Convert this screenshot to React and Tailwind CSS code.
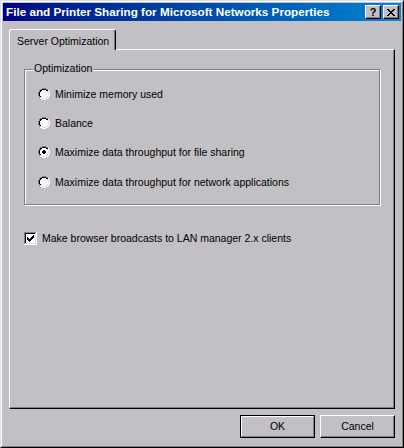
const PAL = { G: '#808080', K: '#000000', L: '#dfdfdf', W: '#ffffff' };

function Pixels({ map }) {
  const w = map[0].length;
  const h = map.length;
  return (
    <svg width={w} height={h} viewBox={`0 0 ${w} ${h}`} shapeRendering="crispEdges" className="block shrink-0">
      {map.flatMap((row, y) =>
        row.split('').map((c, x) =>
          PAL[c] ? <rect key={`${x}-${y}`} x={x} y={y} width="1" height="1" fill={PAL[c]} /> : null
        )
      )}
    </svg>
  );
}

const RADIO = [
  '....GGGG....',
  '..GGKKKKGG..',
  '.GKKWWWWKKW.',
  '.GKWWWWWWLW.',
  'GKWWWWWWWWLW',
  'GKWWWWWWWWLW',
  'GKWWWWWWWWLW',
  'GKWWWWWWWWLW',
  '.GKWWWWWWLW.',
  '.GLLWWWWLLW.',
  '..WWLLLLWW..',
  '....WWWW....',
];

const RADIO_ON = [
  '....GGGG....',
  '..GGKKKKGG..',
  '.GKKWWWWKKW.',
  '.GKWWWWWWLW.',
  'GKWWWKKWWWLW',
  'GKWWKKKKWWLW',
  'GKWWKKKKWWLW',
  'GKWWWKKWWWLW',
  '.GKWWWWWWLW.',
  '.GLLWWWWLLW.',
  '..WWLLLLWW..',
  '....WWWW....',
];

const CHECK_ON = [
  'GGGGGGGGGGGGW',
  'GKKKKKKKKKKLW',
  'GKWWWWWWWWWLW',
  'GKWWWWWWWKWLW',
  'GKWWWWWWKKWLW',
  'GKWKWWWKKKWLW',
  'GKWKKWKKKWWLW',
  'GKWKKKKKWWWLW',
  'GKWWKKKWWWWLW',
  'GKWWWKWWWWWLW',
  'GKWWWWWWWWWLW',
  'GLLLLLLLLLLLW',
  'WWWWWWWWWWWWW',
];

const CLOSE_X = [
  'KK....KK',
  '.KK..KK.',
  '..KKKK..',
  '...KK...',
  '..KKKK..',
  '.KK..KK.',
  'KK....KK',
];

function TitleButton({ children }) {
  return (
    <div className="w-[16px] h-[14px] flex items-center justify-center bg-[#c2c0c4] border border-t-white border-l-white border-r-black border-b-black shadow-[inset_-1px_-1px_0_#808080]">
      {children}
    </div>
  );
}

function RadioRow({ label, checked, className }) {
  return (
    <div className={`h-[12px] flex items-center gap-[5px] ${className}`}>
      <Pixels map={checked ? RADIO_ON : RADIO} />
      <span className="leading-none">{label}</span>
    </div>
  );
}

const options = [
  'Minimize memory used',
  'Balance',
  'Maximize data throughput for file sharing',
  'Maximize data throughput for network applications',
];

export default function App() {
  return (
    <div className="w-[404px] h-[448px] bg-[#c2c0c4] border border-t-[#dfdfdf] border-l-[#dfdfdf] border-r-black border-b-black font-['Liberation_Sans',Arial,sans-serif] text-[10.5px] text-black select-none">
      <div className="h-full border border-t-white border-l-white border-r-[#808080] border-b-[#808080] p-px flex flex-col">
        {/* Title bar */}
        <div className="h-[18px] flex items-center pl-[3px] pr-[2px] bg-linear-to-r from-[#000080] to-[#1084d0]">
          <span className="flex-1 text-white font-bold text-[11.7px] leading-none">
            File and Printer Sharing for Microsoft Networks Properties
          </span>
          <TitleButton>
            <span className="font-bold text-[11px] leading-none">?</span>
          </TitleButton>
          <div className="w-[2px]" />
          <TitleButton>
            <Pixels map={CLOSE_X} />
          </TitleButton>
        </div>

        {/* Body */}
        <div className="flex-1 flex flex-col px-[6px] pt-[8px]">
          {/* Tab strip */}
          <div className="flex">
            <div className="relative z-10 -mb-px w-[107px] h-[21px] bg-[#c2c0c4] border-t border-l border-r border-t-white border-l-white border-r-black shadow-[inset_-1px_0_0_#808080] rounded-t-[3px] pl-[7px] pt-[4px]">
              Server Optimization
            </div>
          </div>

          {/* Tab panel */}
          <div className="h-[360px] border border-t-white border-l-white border-r-black border-b-black shadow-[inset_-1px_-1px_0_#808080] flex flex-col">
            {/* Group box */}
            <div className="relative ml-[14px] mt-[19px] w-[356px] h-[136px] border border-[#808080] shadow-[inset_1px_1px_0_white,1px_1px_0_white]">
              <span className="absolute left-[8px] -top-[7px] px-[1px] bg-[#c2c0c4] leading-none">Optimization</span>
              <div className="flex flex-col gap-[17px] pl-[13px] pt-[18px]">
                {options.map((o, i) => (
                  <RadioRow key={o} label={o} checked={i === 2} className={i === 3 ? 'mt-px' : ''} />
                ))}
              </div>
            </div>

            <div className="ml-[14px] mt-[27px] h-[13px] flex items-center gap-[5px]">
              <Pixels map={CHECK_ON} />
              <span className="leading-none">Make browser broadcasts to LAN manager 2.x clients</span>
            </div>
          </div>

          {/* Dialog buttons */}
          <div className="mt-[6px] flex justify-end gap-[5px]">
            <button className="w-[75px] h-[23px] border border-black bg-[#c2c0c4]">
              <div className="h-full border border-t-white border-l-white border-r-[#808080] border-b-[#808080] flex items-center justify-center">
                OK
              </div>
            </button>
            <button className="w-[75px] h-[23px] bg-[#c2c0c4] border border-t-white border-l-white border-r-black border-b-black shadow-[inset_-1px_-1px_0_#808080] flex items-center justify-center">
              Cancel
            </button>
          </div>
        </div>
      </div>
    </div>
  );
}
